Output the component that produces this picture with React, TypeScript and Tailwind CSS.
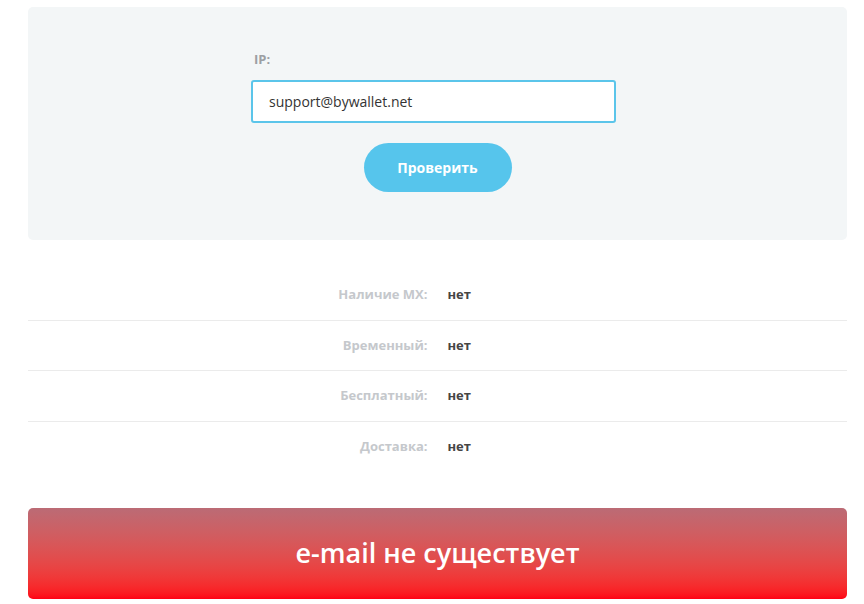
const rows = [
  { label: 'Наличие MX:', value: 'нет' },
  { label: 'Временный:', value: 'нет' },
  { label: 'Бесплатный:', value: 'нет' },
  { label: 'Доставка:', value: 'нет' },
]

export default function App() {
  return (
    <div className="min-h-[604px] w-[864px] bg-white pt-[7px] font-['Open_Sans',sans-serif]">
      <div className="mx-[28px] w-[819px]">
        <div className="flex h-[233px] flex-col items-center rounded-[5px] bg-[#f3f6f7] pt-[43px]">
          <div className="mr-[8px] w-[365px]">
            <label className="block pl-[3px] text-[13px] font-bold text-[#9c9fa3]">IP:</label>
            <input
              defaultValue="support@bywallet.net"
              className="mt-[10px] h-[43px] w-[365px] rounded-[3px] border-2 border-[#5bc5ea] bg-white px-[16px] text-[14px] text-[#333] outline-none"
            />
          </div>
          <button className="mt-[20px] h-[49px] w-[148px] rounded-full bg-[#56c5ec] text-[14px] font-bold text-white">
            Проверить
          </button>
        </div>

        <div className="mt-[30px]">
          {rows.map((row, i) => (
            <div
              key={row.label}
              className={`flex h-[50.5px] items-center text-[13px] font-bold ${
                i < rows.length - 1 ? 'border-b border-[#ebebeb]' : ''
              }`}
            >
              <div className="w-1/2 pr-[10px] text-right text-[#c5c8cc]">{row.label}</div>
              <div className="w-1/2 pl-[10px] text-[#454545]">{row.value}</div>
            </div>
          ))}
        </div>

        <div className="mt-[36px] flex h-[91px] items-center justify-center rounded-[5px] bg-gradient-to-b from-[#bb6b75] to-[#ff0014]">
          <span className="text-[27px] font-semibold text-white">e-mail не существует</span>
        </div>
      </div>
    </div>
  )
}
